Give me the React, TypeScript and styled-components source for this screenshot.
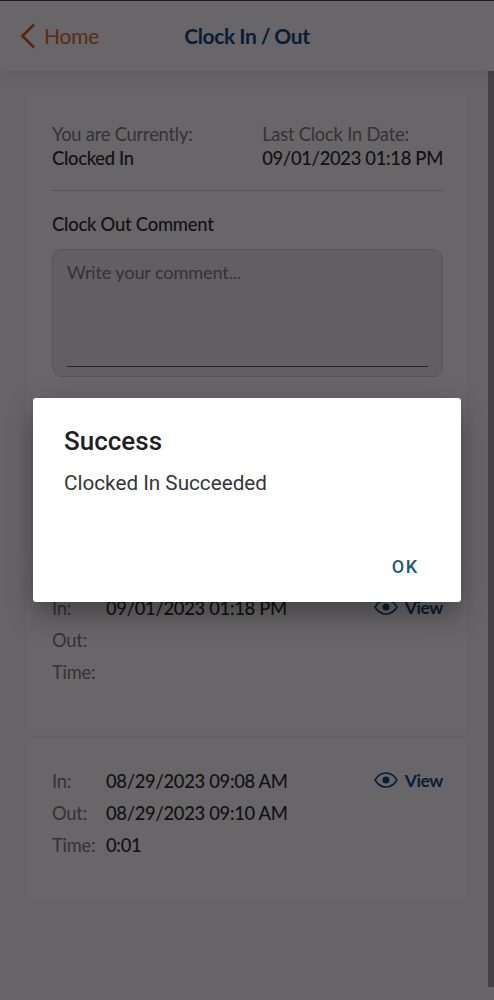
import styled, { createGlobalStyle } from 'styled-components';

const GlobalStyle = createGlobalStyle`
  * {
    box-sizing: border-box;
  }
  body {
    margin: 0;
    background: #fdfcfd;
    font-family: Lato, 'Open Sans', sans-serif;
  }
`;

const Screen = styled.div`
  position: relative;
  display: flex;
  flex-direction: column;
  width: 494px;
  height: 1000px;
  overflow: hidden;
  background: #fdfcfd;
`;

const Header = styled.header`
  display: grid;
  grid-template-columns: 1fr auto 1fr;
  align-items: center;
  height: 71px;
  padding: 0 20px;
  background: #fff;
  border-top: 1px solid #3c3c46;
  box-shadow: 0 2px 18px rgba(0, 40, 40, 0.12);
  z-index: 1;
`;

const BackButton = styled.button`
  display: flex;
  align-items: center;
  gap: 9px;
  padding: 0;
  border: 0;
  background: none;
  color: #d67030;
  font-family: inherit;
  font-size: 21px;
  letter-spacing: -0.2px;
  line-height: 26px;
`;

const Title = styled.h1`
  margin: 0;
  color: #0f4c7e;
  font-size: 21px;
  font-weight: 700;
  letter-spacing: -0.35px;
  word-spacing: -0.5px;
  line-height: 26px;
`;

const Body = styled.main`
  display: flex;
  flex: 1;
  align-items: flex-start;
`;

const Content = styled.div`
  display: flex;
  flex: 1;
  flex-direction: column;
  gap: 4px;
  padding: 23px 21px 0 27px;
`;

const ScrollThumb = styled.div`
  width: 6px;
  height: 916px;
  background: #a6a4a6;
`;

const Card = styled.section<{ $height: number }>`
  height: ${(p) => p.$height}px;
  padding: 28px 24px 0 25px;
  border-radius: 6px;
  background: #fff;
  box-shadow: 0 0 14px rgba(0, 60, 60, 0.02);
`;

const StatusRow = styled.div`
  display: flex;
  justify-content: space-between;
  padding-bottom: 20px;
  border-bottom: 1px solid #d0ccd0;
`;

const Label = styled.div`
  color: #827e82;
  font-size: 18.3px;
  letter-spacing: -0.2px;
  line-height: 24px;
`;

const Value = styled.div`
  color: #302c32;
  font-size: 18.4px;
  font-weight: 500;
  letter-spacing: -0.32px;
  line-height: 24px;
`;

const FieldTitle = styled(Value)`
  margin: 21px 0 13px;
  letter-spacing: -0.24px;
`;

const CommentBox = styled.div`
  height: 128px;
  padding: 10px 14px 9px;
  border: 1px solid #d4d2d4;
  border-radius: 10px;
  background: #efedef;
`;

const CommentInput = styled.textarea`
  display: block;
  width: 100%;
  height: 107px;
  padding: 0;
  border: 0;
  border-bottom: 1px solid #5a565c;
  outline: 0;
  resize: none;
  background: none;
  color: #302c32;
  font-family: inherit;
  font-size: 18.2px;
  letter-spacing: -0.17px;
  line-height: 24px;
  &::placeholder {
    color: #827e82;
  }
`;

const Entry = styled.div`
  display: flex;
  justify-content: space-between;
  align-items: flex-start;
  margin-top: -2px;
`;

const EntryGrid = styled.div`
  display: grid;
  grid-template-columns: 54px auto;
  grid-auto-rows: 32px;
  align-items: center;
`;

const ViewLink = styled.a`
  display: flex;
  align-items: center;
  gap: 7px;
  height: 30px;
  color: #0f4c7e;
  font-size: 17.5px;
  font-weight: 700;
  letter-spacing: -0.4px;
`;

const Overlay = styled.div`
  position: absolute;
  inset: 0;
  z-index: 2;
  display: flex;
  justify-content: center;
  align-items: center;
  background: rgba(4, 0, 4, 0.6);
`;

const Dialog = styled.div`
  display: flex;
  flex-direction: column;
  width: 428px;
  height: 204px;
  padding: 27px 31px 19px;
  border-radius: 3px;
  background: #fff;
  box-shadow: 0 12px 28px rgba(0, 0, 0, 0.34);
  font-family: Roboto, sans-serif;
`;

const DialogTitle = styled.h2`
  margin: 0;
  color: #212124;
  font-size: 26px;
  font-weight: 500;
  line-height: 32px;
`;

const DialogText = styled.p`
  margin: 13px 0 0;
  color: #36363a;
  font-size: 20.7px;
  line-height: 26px;
`;

const DialogButton = styled.button`
  align-self: flex-end;
  margin: auto 11px 0 0;
  padding: 0;
  border: 0;
  background: none;
  color: #175a7e;
  font-family: inherit;
  font-size: 18px;
  font-weight: 500;
  letter-spacing: 1.8px;
  line-height: 32px;
`;

const EyeIcon = () => (
  <svg width="24" height="18" viewBox="0 0 24 18" fill="none">
    <path
      d="M1 9C3.6 4.6 7.4 2 12 2s8.4 2.6 11 7c-2.6 4.4-6.4 7-11 7S3.6 13.4 1 9Z"
      stroke="currentColor"
      strokeWidth="1.5"
      strokeLinejoin="round"
    />
    <circle cx="12" cy="9" r="3.5" fill="currentColor" />
  </svg>
);

const entries = [
  { in: '09/01/2023 01:18 PM', out: '', time: '', height: 169 },
  { in: '08/29/2023 09:08 AM', out: '08/29/2023 09:10 AM', time: '0:01', height: 161 },
];

export default function App() {
  return (
    <>
      <GlobalStyle />
      <Screen>
        <Header>
          <BackButton>
            <svg width="15" height="26" viewBox="0 0 15 26" fill="none">
              <path d="M14 1.5 2.5 13 14 24.5" stroke="#d8641c" strokeWidth="2.8" />
            </svg>
            Home
          </BackButton>
          <Title>Clock In / Out</Title>
        </Header>
        <Body>
          <Content>
            <Card $height={468}>
              <StatusRow>
                <div>
                  <Label>You are Currently:</Label>
                  <Value>Clocked In</Value>
                </div>
                <div>
                  <Label>Last Clock In Date:</Label>
                  <Value>09/01/2023 01:18 PM</Value>
                </div>
              </StatusRow>
              <FieldTitle>Clock Out Comment</FieldTitle>
              <CommentBox>
                <CommentInput placeholder="Write your comment..." />
              </CommentBox>
            </Card>
            {entries.map((entry) => (
              <Card key={entry.in} $height={entry.height}>
                <Entry>
                  <EntryGrid>
                    <Label>In:</Label>
                    <Value>{entry.in}</Value>
                    <Label>Out:</Label>
                    <Value>{entry.out}</Value>
                    <Label>Time:</Label>
                    <Value>{entry.time}</Value>
                  </EntryGrid>
                  <ViewLink>
                    <EyeIcon />
                    View
                  </ViewLink>
                </Entry>
              </Card>
            ))}
          </Content>
          <ScrollThumb />
        </Body>
        <Overlay>
          <Dialog role="alertdialog">
            <DialogTitle>Success</DialogTitle>
            <DialogText>Clocked In Succeeded</DialogText>
            <DialogButton>OK</DialogButton>
          </Dialog>
        </Overlay>
      </Screen>
    </>
  );
}
